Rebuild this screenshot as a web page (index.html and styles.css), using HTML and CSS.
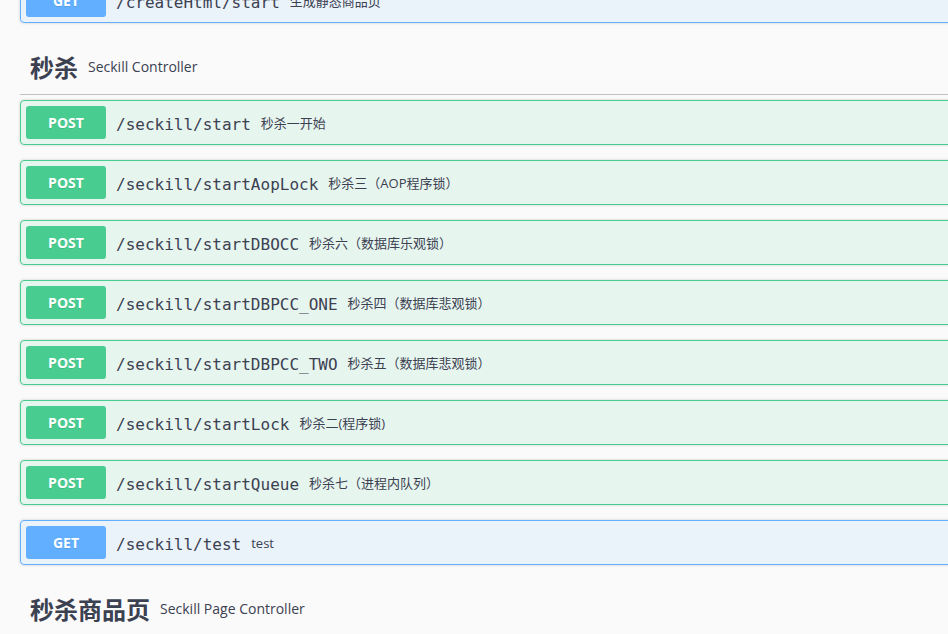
FILE: index.html
```html
<!DOCTYPE html>
<html lang="zh">
<head>
<meta charset="utf-8">
<title>Swagger UI</title>
<link rel="stylesheet" href="styles.css">
</head>
<body>
<div class="wrapper">
  <div class="opblock get">
    <div class="summary"><span class="method">GET</span><span class="path">/createHtml/start</span><span class="desc">生成静态商品页</span></div>
  </div>

  <section class="tag-section">
    <h4 class="tag">秒杀<small>Seckill Controller</small></h4>
    <div class="opblock post"><div class="summary"><span class="method">POST</span><span class="path">/seckill/start</span><span class="desc">秒杀一开始</span></div></div>
    <div class="opblock post"><div class="summary"><span class="method">POST</span><span class="path">/seckill/startAopLock</span><span class="desc">秒杀三（AOP程序锁）</span></div></div>
    <div class="opblock post"><div class="summary"><span class="method">POST</span><span class="path">/seckill/startDBOCC</span><span class="desc">秒杀六（数据库乐观锁）</span></div></div>
    <div class="opblock post"><div class="summary"><span class="method">POST</span><span class="path">/seckill/startDBPCC_ONE</span><span class="desc">秒杀四（数据库悲观锁）</span></div></div>
    <div class="opblock post"><div class="summary"><span class="method">POST</span><span class="path">/seckill/startDBPCC_TWO</span><span class="desc">秒杀五（数据库悲观锁）</span></div></div>
    <div class="opblock post"><div class="summary"><span class="method">POST</span><span class="path">/seckill/startLock</span><span class="desc">秒杀二(程序锁)</span></div></div>
    <div class="opblock post"><div class="summary"><span class="method">POST</span><span class="path">/seckill/startQueue</span><span class="desc">秒杀七（进程内队列）</span></div></div>
    <div class="opblock get"><div class="summary"><span class="method">GET</span><span class="path">/seckill/test</span><span class="desc">test</span></div></div>
  </section>

  <section class="tag-section">
    <h4 class="tag">秒杀商品页<small>Seckill Page Controller</small></h4>
  </section>
</div>
</body>
</html>
```

FILE: styles.css
```css
html, body {
  margin: 0;
  padding: 0;
  background: #fafafa;
  overflow: hidden;
}
body {
  font-family: "Open Sans", "Noto Sans CJK SC", sans-serif;
  color: #3b4151;
}
.wrapper {
  width: 1100px;
  padding: 0 20px;
  margin-top: -22px;
}
.tag-section {
  padding-top: 2px;
}
.tag {
  display: flex;
  align-items: center;
  margin: 0 0 5px;
  padding: 10px 20px 10px 10px;
  font-size: 24px;
  line-height: 34px;
  font-weight: 700;
  font-family: "Noto Sans CJK SC", sans-serif;
  border-bottom: 1px solid rgba(59, 65, 81, 0.3);
}
.tag small {
  font-size: 14px;
  font-weight: 400;
  padding: 0 10px;
  font-family: "Open Sans", "Noto Sans CJK SC", sans-serif;
}
.opblock {
  margin: 0 0 15px;
  border: 1px solid #000;
  border-radius: 4px;
  box-shadow: 0 0 3px rgba(0, 0, 0, 0.19);
}
.opblock.post {
  border-color: #49cc90;
  background: rgba(73, 204, 144, 0.1);
}
.opblock.get {
  border-color: #61affe;
  background: rgba(97, 175, 254, 0.1);
}
.summary {
  display: flex;
  align-items: center;
  padding: 5px;
}
.method {
  box-sizing: border-box;
  min-width: 80px;
  height: 33px;
  padding: 6px 15px;
  border-radius: 3px;
  font-size: 14px;
  line-height: 21px;
  font-weight: 700;
  text-align: center;
  color: #fff;
  text-shadow: 0 1px 0 rgba(0, 0, 0, 0.1);
  font-family: "Open Sans", sans-serif;
}
.post .method { background: #49cc90; }
.get .method { background: #61affe; }
.path {
  padding: 3px 10px 0;
  font-family: "DejaVu Sans Mono", monospace;
  font-size: 16px;
  font-weight: 400;
  color: #3b4151;
}
.desc {
  font-size: 13px;
  color: #3b4151;
  font-family: "Open Sans", "Noto Sans CJK SC", sans-serif;
}
```
